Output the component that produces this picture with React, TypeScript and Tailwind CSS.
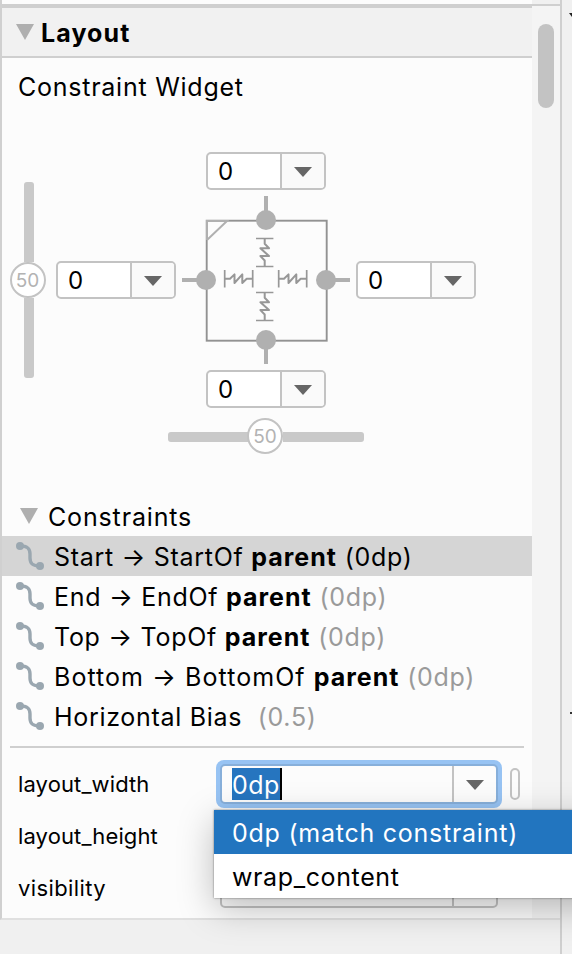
import type { ReactNode } from 'react';

function Combo() {
  return (
    <div className="flex h-[38px] w-[120px] shrink-0 overflow-hidden rounded-[5px] border-2 border-[#c3c3c3] bg-white">
      <div className="w-[72px] pl-[10px] text-[24px] leading-[35px]">0</div>
      <div className="flex flex-1 items-center justify-center border-l-2 border-[#c3c3c3] bg-[#fafafa]">
        <Arrow />
      </div>
    </div>
  );
}

function Arrow() {
  return (
    <svg width="18" height="10" viewBox="0 0 18 10" className="mt-[2px] mr-[1px] shrink-0">
      <path d="M0 0H18L9 10Z" fill="#666" />
    </svg>
  );
}

function Disclosure() {
  return (
    <svg width="18" height="16" viewBox="0 0 18 16" className="shrink-0">
      <path d="M0 0H18L9 16Z" fill="#afafaf" />
    </svg>
  );
}

function Spring({ transform }: { transform: string }) {
  return (
    <g transform={transform} fill="none" stroke="#979797" strokeLinejoin="round">
      <path d="M-14 -8.7V8.7M14 -8.7V8.7" strokeWidth="1.7" />
      <path d="M-14 0H-8.7L-4.2 -4.3V4.3L3.6 -4.3V4.3L8 0H14" strokeWidth="2" />
    </g>
  );
}

function ConstraintBox() {
  return (
    <svg width="168" height="168" viewBox="182 196 168 168" className="shrink-0">
      <rect x="206.7" y="220.7" width="120" height="120" fill="none" stroke="#929292" strokeWidth="1.9" />
      <path d="M207 240V221H227L207 240" fill="none" stroke="#b0b0b0" strokeWidth="2" />
      <path d="M266 196V212M266 348V364M182 280H198M334 280H350" stroke="#b0b0b0" strokeWidth="4" />
      <g fill="#b0b0b0">
        <circle cx="266" cy="220" r="10" />
        <circle cx="266" cy="340" r="10" />
        <circle cx="206" cy="280" r="10" />
        <circle cx="326" cy="280" r="10" />
      </g>
      <Spring transform="translate(238.7 278.7)" />
      <Spring transform="translate(292.7 278.7)" />
      <Spring transform="translate(264.7 252.5) rotate(90)" />
      <Spring transform="translate(264.7 306.5) rotate(90)" />
    </svg>
  );
}

function Knob() {
  return (
    <div className="-ml-px flex h-9 w-9 shrink-0 items-center justify-center rounded-full border-2 border-[#c3c3c3] bg-white pt-[2px] text-[19px] text-[#b3b3b3]">
      50
    </div>
  );
}

function ConnectionIcon() {
  return (
    <svg width="28" height="28" viewBox="0 0 28 28" className="shrink-0">
      <path d="M4 4C11 4 14 6 14 12V16C14 22 17 24 24 24" fill="none" stroke="#9aa7b0" strokeWidth="3.4" />
      <circle cx="4" cy="4" r="4" fill="#9aa7b0" />
      <circle cx="24" cy="24" r="4" fill="#9aa7b0" />
    </svg>
  );
}

function Row({ children, selected = false }: { children: ReactNode; selected?: boolean }) {
  return (
    <div className={`flex h-10 items-center pl-[14px] ${selected ? 'bg-[#d5d5d5]' : ''}`}>
      <ConnectionIcon />
      <div className="ml-[10px] pt-[2px] text-[25px] leading-[38px] tracking-[0.7px] whitespace-pre [&_b]:tracking-[1px]">
        {children}
      </div>
    </div>
  );
}

export default function App() {
  return (
    <div className="relative flex h-[954px] w-[572px] overflow-hidden bg-[#f0f0f0] font-['Inter','Liberation_Sans',sans-serif] text-black">
      <div className="flex w-[562px] shrink-0 flex-col border-r-2 border-[#cfcfcf]">
        <div className="flex h-[920px] border-b-2 border-l-2 border-b-[#e0e0e0] border-l-[#d0d0d0]">
          <div className="w-[530px] shrink-0 bg-[#fcfcfc]">
            <div className="mt-1 flex h-[54px] items-center border-t-4 border-b-2 border-[#cfcfcf] bg-[#f1f1f1] pl-[14px]">
              <Disclosure />
              <h1 className="ml-[7px] pt-[3px] text-[25px] font-bold tracking-[1.1px]">Layout</h1>
            </div>
            <div className="h-[94px] pt-[12px] pl-4 text-[25px] leading-[34px] tracking-[0.75px]">Constraint Widget</div>
            <div className="flex h-64 items-center pl-2">
              <div className="flex h-[196px] w-9 flex-col items-center">
                <div className="h-20 w-[10px] translate-x-px rounded-t-[3px] bg-[#c9c9c9]" />
                <Knob />
                <div className="h-20 w-[10px] translate-x-px rounded-b-[3px] bg-[#c9c9c9]" />
              </div>
              <div className="ml-[10px] flex items-center gap-[6px]">
                <Combo />
                <div className="flex flex-col items-center gap-[6px]">
                  <Combo />
                  <ConstraintBox />
                  <Combo />
                </div>
                <Combo />
              </div>
            </div>
            <div className="mt-[10px] ml-[166px] flex w-[196px] items-center">
              <div className="mt-[2px] h-[10px] w-20 rounded-l-[3px] bg-[#c9c9c9]" />
              <Knob />
              <div className="mt-[2px] h-[10px] w-[81px] rounded-r-[3px] bg-[#c9c9c9]" />
            </div>
            <div className="mt-[42px] flex h-10 items-center pl-[18px]">
              <Disclosure />
              <h2 className="ml-[10px] pt-[3px] text-[25px] tracking-[0.85px]">Constraints</h2>
            </div>
            <Row selected>Start → StartOf <b>parent</b> (0dp)</Row>
            <Row>End → EndOf <b>parent</b> <span className="text-[#9a9a9a]">(0dp)</span></Row>
            <Row>Top → TopOf <b>parent</b> <span className="text-[#9a9a9a]">(0dp)</span></Row>
            <Row><span className="tracking-[1.05px]">Bottom → BottomOf </span><b>parent</b> <span className="text-[#9a9a9a]">(0dp)</span></Row>
            <Row>Horizontal Bias  <span className="text-[#9a9a9a]">(0.5)</span></Row>
            <div className="mt-[10px] ml-2 h-[2px] w-[514px] bg-[#cfcfcf]" />
            <div className="flex pl-4">
              <div className="w-[202px] pt-[10px] text-[22px] leading-[52px] tracking-[0.12px]">
                <div>layout_width</div>
                <div>layout_height</div>
                <div className="tracking-[0.4px]">visibility</div>
              </div>
              <div className="pt-[12px]">
                <div className="flex items-center">
                  <div className="-ml-[4px] h-12 w-[286px] shrink-0 rounded-[8px] bg-[#97c3f3] p-[4px]">
                    <div className="flex h-10 rounded-[5px] border-2 border-[#87afda] bg-[#fcfcfc] pl-[10px]">
                      <div className="mt-[2px] h-8 border-r-2 border-black bg-[#2675bf] text-[25px] leading-[34px] tracking-[0.5px] text-white">0dp</div>
                      <div className="ml-auto flex w-[44px] items-center justify-center border-l-2 border-[#c3c3c3]">
                        <Arrow />
                      </div>
                    </div>
                  </div>
                  <div className="ml-2 h-8 w-[10px] rounded-[5px] border-2 border-[#c3c3c3]" />
                </div>
                <div className="mt-[62px] flex h-[38px] w-[278px] justify-end rounded-[5px] border-2 border-[#c3c3c3]">
                  <div className="w-[44px] border-l-2 border-[#c3c3c3]" />
                </div>
              </div>
            </div>
          </div>
          <div className="mt-1 flex w-7 justify-center border-t-[2px] border-[#cfcfcf] bg-[#f4f4f4]">
            <div className="mt-[18px] h-[84px] w-4 rounded-full bg-[#c3c3c3]" />
          </div>
        </div>
      </div>
      <svg width="10" height="954" className="shrink-0">
        <path d="M7 13L10 17V13Z" fill="#222" />
        <path d="M8 713H10" stroke="#333" strokeWidth="2" />
      </svg>
      <div className="absolute top-[810px] left-[214px] w-[420px] bg-white text-[25px] tracking-[0.75px] shadow-[0_0_2px_rgba(0,0,0,0.5),0_10px_36px_rgba(0,0,0,0.26)]">
        <div className="h-11 bg-[#2275bf] pl-[18px] leading-[46px] text-white">0dp (match constraint)</div>
        <div className="h-11 pl-[18px] leading-[46px] tracking-[0.62px]">wrap_content</div>
      </div>
    </div>
  );
}
